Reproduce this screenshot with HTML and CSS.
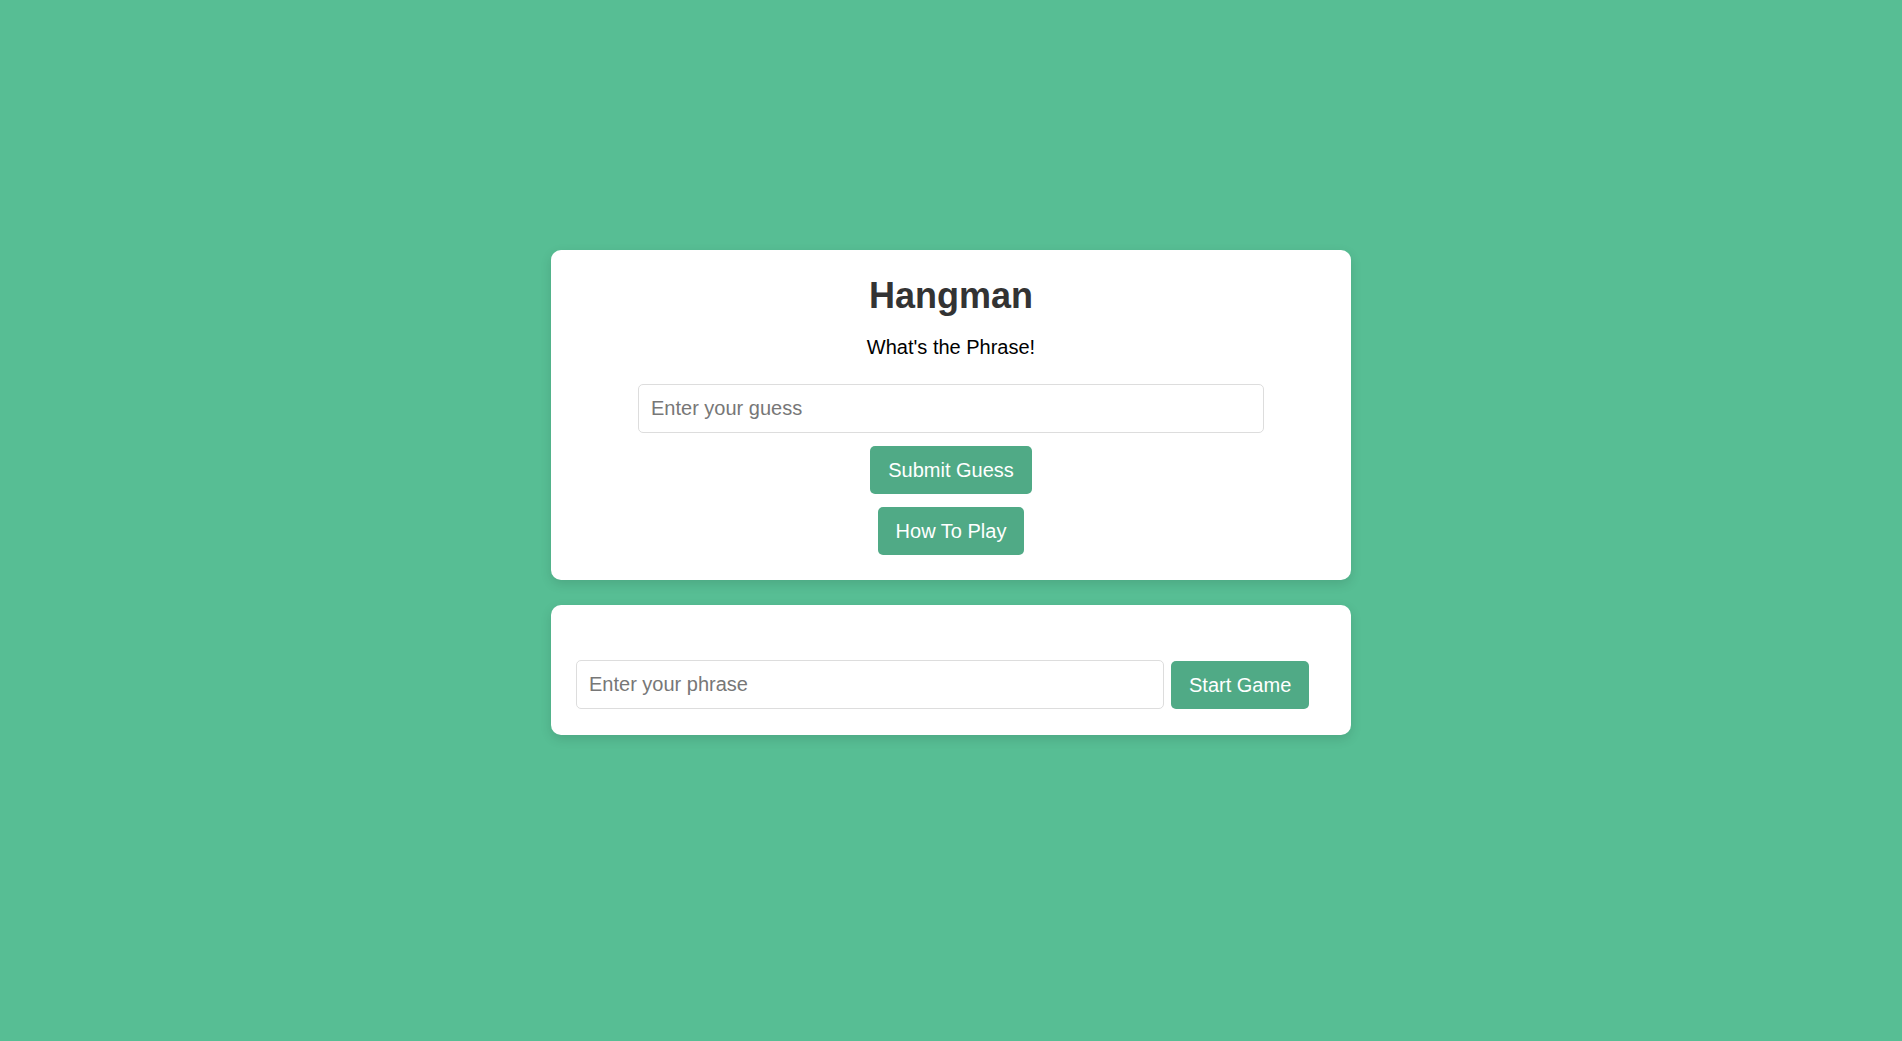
FILE: index.html
```html
<!DOCTYPE html>
<html lang="en">
<head>
<meta charset="utf-8">
<title>Hangman</title>
<link rel="stylesheet" href="styles.css">
</head>
<body>
<main class="page">
  <section class="card game-card">
    <h1 class="title">Hangman</h1>
    <p class="subtitle">What's the Phrase!</p>
    <input class="field guess-field" type="text" placeholder="Enter your guess">
    <button class="btn" type="button">Submit Guess</button>
    <button class="btn" type="button">How To Play</button>
  </section>
  <section class="card setup-card">
    <div class="phrase-display"></div>
    <div class="setup-row">
      <input class="field phrase-field" type="text" placeholder="Enter your phrase">
      <button class="btn" type="button">Start Game</button>
    </div>
  </section>
</main>
</body>
</html>
```

FILE: styles.css
```css
html, body {
  margin: 0;
  padding: 0;
}
body {
  background: #57be94;
  font-family: "Liberation Sans", Arial, sans-serif;
  min-height: 1041px;
}
.page {
  display: flex;
  flex-direction: column;
  align-items: center;
  gap: 25px;
  padding-top: 250px;
}
.card {
  box-sizing: border-box;
  width: 800px;
  background: #ffffff;
  border-radius: 10px;
  box-shadow: 0 4px 12px rgba(0, 0, 0, 0.12);
  padding: 25px;
}
.game-card {
  display: flex;
  flex-direction: column;
  align-items: center;
}
.setup-card {
  padding-bottom: 26px;
}
.title {
  margin: 0 0 20px;
  font-size: 36px;
  font-weight: bold;
  color: #333333;
  line-height: 41px;
}
.subtitle {
  margin: 0 0 25px;
  font-size: 20px;
  line-height: 23px;
  color: #000000;
}
.field {
  box-sizing: border-box;
  height: 49px;
  border: 1px solid #dddddd;
  border-radius: 5px;
  padding: 12px;
  font-family: "Liberation Sans", Arial, sans-serif;
  font-size: 20px;
  color: #333;
  background: #fff;
  outline: none;
}
.field::placeholder {
  color: #777777;
}
.guess-field {
  width: 626px;
  margin-bottom: 13px;
}
.btn {
  box-sizing: border-box;
  height: 48px;
  border: none;
  border-radius: 5px;
  background: #50aa86;
  color: #ffffff;
  font-family: "Liberation Sans", Arial, sans-serif;
  font-size: 20px;
  line-height: 24px;
  padding: 12px 18px;
  cursor: pointer;
}
.game-card .btn + .btn {
  margin-top: 13px;
}
.phrase-display {
  height: 30px;
}
.setup-row {
  display: flex;
  align-items: center;
  gap: 7px;
}
.phrase-field {
  width: 588px;
}
```
